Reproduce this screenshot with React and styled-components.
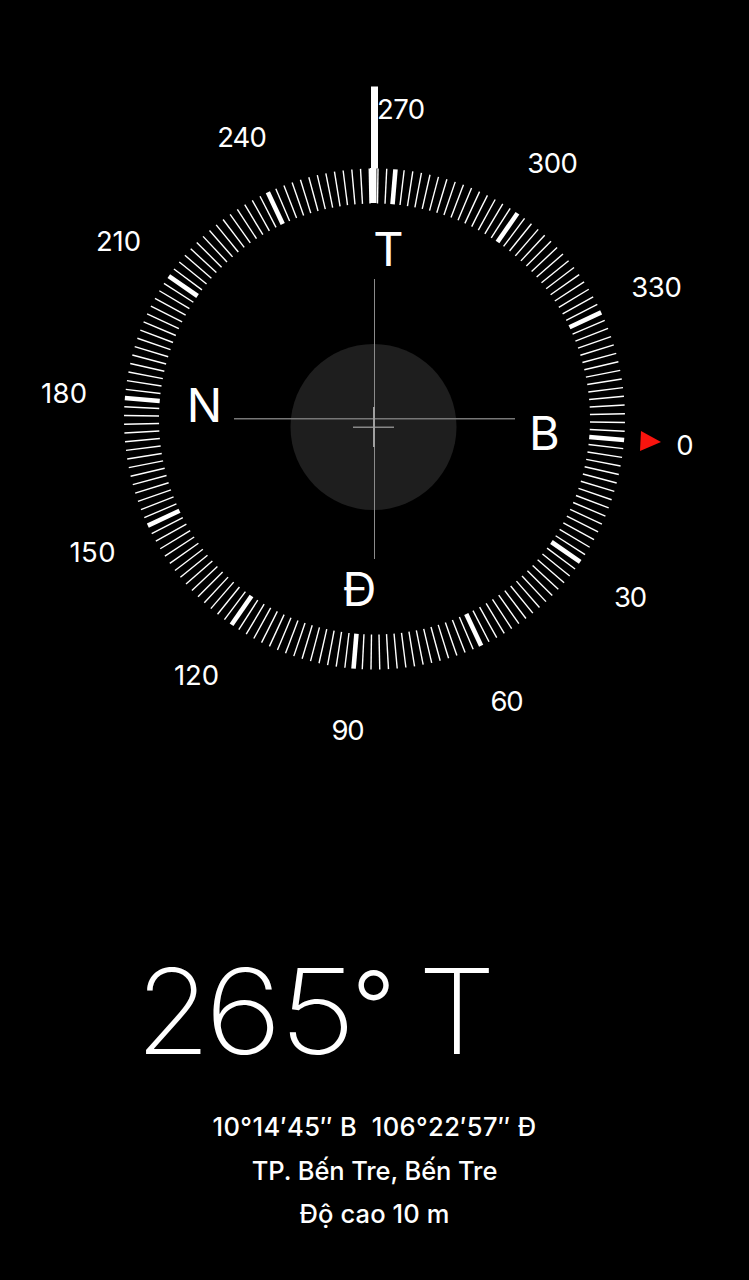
import styled, { createGlobalStyle } from "styled-components";

const HEADING = 265.2;
const CENTER = { x: 374.5, y: 419 };
const OUTER_RADIUS = 250.5;
const INNER_RADIUS = 215.5;

const ticks = Array.from({ length: 180 }, (_, index) => index * 2);

const degreeLabels = [
  { text: "0", x: 685, y: 445, width: 16 },
  { text: "30", x: 630.5, y: 597, width: 33 },
  { text: "60", x: 507, y: 701, width: 33 },
  { text: "90", x: 348, y: 729.5, width: 33 },
  { text: "120", x: 196.5, y: 675, width: 45 },
  { text: "150", x: 92.5, y: 551.5, width: 46 },
  { text: "180", x: 64, y: 393, width: 46 },
  { text: "210", x: 118.5, y: 241, width: 45 },
  { text: "240", x: 242, y: 137, width: 49.5 },
  { text: "270", x: 401, y: 108.5, width: 48 },
  { text: "300", x: 552.5, y: 163, width: 50.5 },
  { text: "330", x: 656.5, y: 286.5, width: 50.5 },
];

const directions = [
  { text: "T", x: 388.5, y: 248.5 },
  { text: "B", x: 544.5, y: 432.5 },
  { text: "Đ", x: 359.5, y: 588.5 },
  { text: "N", x: 204.5, y: 404.5 },
];

const Dial = () => (
  <DialSvg viewBox="0 0 749 800">
    <circle cx="373.5" cy="427" r="83" fill="#1e1e1e" />
    <g transform={`translate(${CENTER.x} ${CENTER.y})`}>
      {ticks.map((degree) => (
        <Tick
          key={degree}
          $major={degree % 30 === 0}
          y1={-OUTER_RADIUS}
          y2={-INNER_RADIUS}
          transform={`rotate(${degree - HEADING})`}
        />
      ))}
    </g>
    <rect x="371" y="86.5" width="7" height="82" fill="#fff" />
    <rect x="370" y="168" width="6.5" height="35" fill="#fff" />
    <rect x="234" y="418" width="281" height="1.5" fill="#777" />
    <rect x="374" y="279" width="1" height="280" fill="#8b8b8b" />
    <rect x="353" y="426.5" width="41" height="1.5" fill="#888" />
    <rect x="373" y="407" width="2" height="40" fill="#a0a0a0" />
    <path d="M641 431 L661 442 L640 451 Z" fill="#f8140e" />
    {degreeLabels.map(({ text, x, y, width }) => (
      <DegreeLabel key={text} x={x} y={y + 10} textLength={width}>
        {text}
      </DegreeLabel>
    ))}
    {directions.map(({ text, x, y }) => (
      <DirectionLabel key={text} x={x} y={y + 17}>
        {text}
      </DirectionLabel>
    ))}
  </DialSvg>
);

const App = () => {
  return (
    <Screen>
      <GlobalStyle />
      <Dial />
      <Heading>
        <Glyph $width={68} $stretch={1.03}>
          2
        </Glyph>
        <Glyph $width={73} $stretch={1.13}>
          6
        </Glyph>
        <Glyph $width={75} $stretch={1.13}>
          5
        </Glyph>
        <DegreeSign $width={38} $stretch={1}>
          °
        </DegreeSign>
        <Glyph $width={128} $stretch={1.06}>
          T
        </Glyph>
      </Heading>
      <Location>
        <Line $spacing="0.4px">10°14′45″ B&nbsp; 106°22′57″ Đ</Line>
        <Line $spacing="-0.1px">TP. Bến Tre, Bến Tre</Line>
        <Line $spacing="0.1px">Độ cao 10 m</Line>
      </Location>
    </Screen>
  );
};

export default App;

const GlobalStyle = createGlobalStyle`
  body {
    margin: 0;
    background-color: #000;
  }
`;

const Screen = styled.main`
  width: 749px;
  height: 1280px;
  overflow: hidden;
  display: flex;
  flex-direction: column;
  background-color: #000;
  color: #fff;
  font-family: Inter, "Noto Sans", sans-serif;
`;

const DialSvg = styled.svg`
  display: block;
  flex-shrink: 0;
  width: 749px;
  height: 800px;
`;

const Tick = styled.line`
  stroke: #fff;
  stroke-width: ${(props) => (props.$major ? 4.6 : 1.4)};
`;

const DegreeLabel = styled.text`
  fill: #fff;
  font-size: 27.5px;
  font-optical-sizing: none;
  text-anchor: middle;
`;

const DirectionLabel = styled.text`
  fill: #fff;
  font-size: 47px;
  text-anchor: middle;
`;

const Heading = styled.h1`
  display: flex;
  height: 144px;
  margin: 139px 0 0;
  padding-left: 138.5px;
  font-size: 118px;
  font-weight: 240;
  line-height: 144px;
`;

const Glyph = styled.span`
  display: flex;
  justify-content: center;
  width: ${(props) => props.$width}px;
  transform: scaleX(${(props) => props.$stretch});
`;

const DegreeSign = styled(Glyph)`
  font-size: 95px;
  font-weight: 260;
  line-height: 133px;
`;

const Location = styled.div`
  display: flex;
  flex-direction: column;
  align-items: center;
  margin-top: 22px;
`;

const Line = styled.p`
  margin: 0;
  font-size: 25.5px;
  font-weight: 450;
  line-height: 43.5px;
  letter-spacing: ${(props) => props.$spacing};
  white-space: nowrap;
`;
